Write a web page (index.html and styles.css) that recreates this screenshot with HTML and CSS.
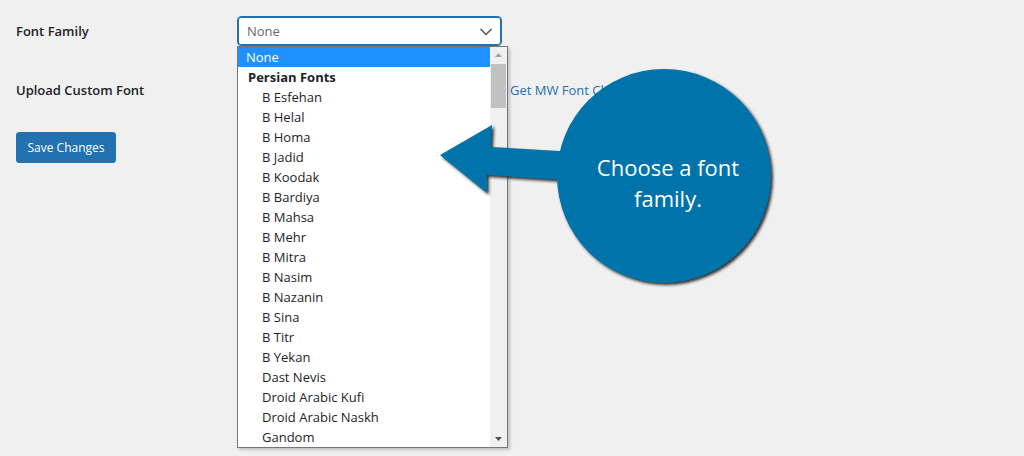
FILE: index.html
```html
<!DOCTYPE html>
<html lang="en">
<head>
    <meta charset="UTF-8">
    <title>Font Settings</title>
    <link rel="stylesheet" href="styles.css">
</head>
<body>
    <div class="page">
        <div class="form-row first">
            <div class="label">Font Family</div>
            <div class="field">
                <div class="select">
                    <span>None</span>
                    <svg class="chevron" width="14" height="8" viewBox="0 0 14 8"><path d="M1.5 1l5.5 5.5 5.5-5.5" fill="none" stroke="#50575e" stroke-width="1.5"/></svg>
                </div>
                <div class="dropdown">
                    <div class="options">
                        <div class="opt active">None</div>
                        <div class="group">Persian Fonts</div>
                        <div class="opt sub">B Esfehan</div>
                        <div class="opt sub">B Helal</div>
                        <div class="opt sub">B Homa</div>
                        <div class="opt sub">B Jadid</div>
                        <div class="opt sub">B Koodak</div>
                        <div class="opt sub">B Bardiya</div>
                        <div class="opt sub">B Mahsa</div>
                        <div class="opt sub">B Mehr</div>
                        <div class="opt sub">B Mitra</div>
                        <div class="opt sub">B Nasim</div>
                        <div class="opt sub">B Nazanin</div>
                        <div class="opt sub">B Sina</div>
                        <div class="opt sub">B Titr</div>
                        <div class="opt sub">B Yekan</div>
                        <div class="opt sub">Dast Nevis</div>
                        <div class="opt sub">Droid Arabic Kufi</div>
                        <div class="opt sub">Droid Arabic Naskh</div>
                        <div class="opt sub">Gandom</div>
                    </div>
                    <div class="scrollbar">
                        <svg width="17" height="17" viewBox="0 0 17 17"><path d="M5 10h7l-3.5-4z" fill="#a3a3a3"/></svg>
                        <div class="thumb"></div>
                        <div class="track"></div>
                        <svg width="17" height="17" viewBox="0 0 17 17"><path d="M5 7h7l-3.5 4z" fill="#505050"/></svg>
                    </div>
                </div>
            </div>
        </div>

        <div class="form-row second">
            <div class="label">Upload Custom Font</div>
            <div class="field">
                <span class="file-input"></span>
                <a class="pro-link" href="#">Get MW Font Changer Pro</a>
            </div>
        </div>

        <button class="save">Save Changes</button>

        <div class="callout">
            <svg width="360" height="250" viewBox="430 60 360 250">
                <g class="callout-shape">
                    <polygon points="440,155 492,125 491,147 575,152 575,181 487,175 487,193" />
                    <circle cx="664" cy="176" r="107" />
                </g>
            </svg>
            <div class="callout-text">Choose a font<br>family.</div>
        </div>
    </div>
</body>
</html>
```

FILE: styles.css
```css
body {
    margin: 0;
    background: #f0f0f1;
    font-family: 'Open Sans', 'Noto Sans', sans-serif;
    font-size: 13px;
    color: #1d2327;
}

.page {
    position: relative;
    padding: 16px;
    height: 424px;
    overflow: hidden;
}

.form-row {
    display: flex;
    align-items: center;
    height: 30px;
}

.form-row.first {
    margin-bottom: 29px;
}

.form-row.second {
    margin-bottom: 27px;
}

.label {
    width: 221px;
    font-weight: 600;
    font-size: 13px;
}

.field {
    position: relative;
    display: flex;
    align-items: center;
}

.select {
    box-sizing: border-box;
    width: 265px;
    height: 30px;
    border: 1px solid #2271b1;
    border-radius: 4px;
    background: #fff;
    box-shadow: 0 0 0 1px #2271b1 inset;
    display: flex;
    align-items: center;
    justify-content: space-between;
    padding: 0 8px 0 9px;
    color: #646970;
}

.chevron {
    margin-top: 1px;
}

.dropdown {
    position: absolute;
    top: 30px;
    left: 0;
    width: 269px;
    height: 400px;
    border: 1px solid #767676;
    background: #fff;
    display: flex;
    box-shadow: 2px 2px 3px rgba(0, 0, 0, 0.2);
    z-index: 2;
}

.options {
    flex: 1;
}

.opt, .group {
    height: 20px;
    line-height: 20px;
    padding-left: 8px;
    white-space: nowrap;
}

.opt.active {
    background: #1e90ff;
    color: #fff;
}

.group {
    font-weight: 700;
    padding-left: 10px;
}

.opt.sub {
    padding-left: 24px;
}

.scrollbar {
    width: 17px;
    background: #f0f0f0;
    display: flex;
    flex-direction: column;
}

.thumb {
    margin: 0 1px;
    height: 44px;
    background: #c1c1c1;
}

.track {
    flex: 1;
}

.file-input {
    width: 273px;
    height: 20px;
}

.pro-link {
    color: #2271b1;
    text-decoration: none;
    font-size: 13px;
}

.save {
    background: #2271b1;
    border: 1px solid #2271b1;
    border-radius: 3px;
    color: #fff;
    font-family: 'Open Sans', 'Noto Sans', sans-serif;
    font-size: 12px;
    width: 100px;
    height: 31px;
    padding: 0;
}

/* callout overlay */
.callout {
    position: absolute;
    left: 430px;
    top: 60px;
    width: 360px;
    height: 250px;
    z-index: 3;
}

.callout-shape {
    fill: #0073aa;
    filter: drop-shadow(2px 2px 1.5px rgba(0, 0, 0, 0.8));
}

.callout-text {
    position: absolute;
    left: 130px;
    top: 92px;
    width: 216px;
    text-align: center;
    color: #fff;
    font-size: 22px;
    line-height: 31px;
}
```
